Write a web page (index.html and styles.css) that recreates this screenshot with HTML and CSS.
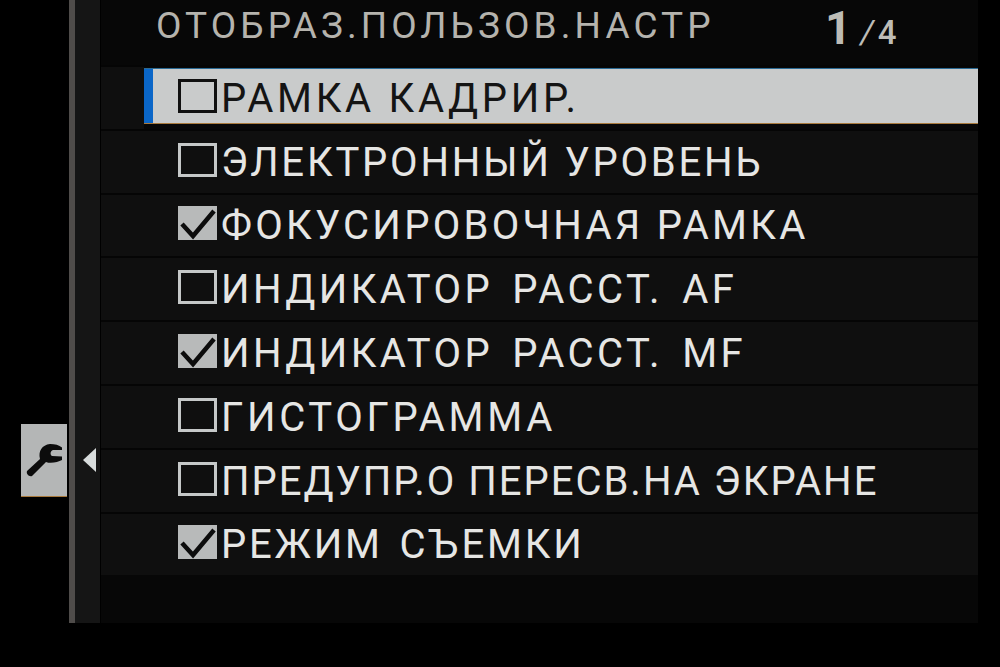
FILE: index.html
```html
<!DOCTYPE html>
<html lang="en">
<head>
    <meta charset="UTF-8">
    <title>Отображ. пользов. настр</title>
    <link rel="stylesheet" href="styles.css">
</head>
<body>
    <div class="screen">
        <div class="side">
            <div class="tool-tab">
                <svg class="tool-icon" viewBox="0 0 46 72">
                    <path d="M6 47 L19 35 C17 27 21 21 29 20 C34 20 38 21 41 23.5 L41 26 L32 26 C29 27 29 31 31 32 L41 32.5 L41 36 C37 38 30 40 25 38 L11 52 C8 53 5 50 6 47 Z" />
                </svg>
            </div>
        </div>
        <div class="edge"></div>
        <div class="rail"><span class="rail-arrow"></span></div>
        <div class="panel">
            <div class="header">
                <span class="title">ОТОБРАЗ.ПОЛЬЗОВ.НАСТР</span>
                <span class="page"><b>1</b><i>/</i>4</span>
            </div>
            <div class="row selected">
                <span class="box"></span><span class="label wide">РАМКА КАДРИР.</span>
            </div>
            <div class="row">
                <span class="box"></span><span class="label">ЭЛЕКТРОННЫЙ УРОВЕНЬ</span>
            </div>
            <div class="row">
                <span class="box checked"><svg viewBox="0 0 39 34"><path d="M4 18 L15 30 L36 5" /></svg></span><span class="label loose">ФОКУСИРОВОЧНАЯ РАМКА</span>
            </div>
            <div class="row">
                <span class="box"></span><span class="label spaced">ИНДИКАТОР РАССТ. AF</span>
            </div>
            <div class="row">
                <span class="box checked"><svg viewBox="0 0 39 34"><path d="M4 18 L15 30 L36 5" /></svg></span><span class="label spaced">ИНДИКАТОР РАССТ. MF</span>
            </div>
            <div class="row">
                <span class="box"></span><span class="label wide">ГИСТОГРАММА</span>
            </div>
            <div class="row">
                <span class="box"></span><span class="label tight">ПРЕДУПР.О ПЕРЕСВ.НА ЭКРАНЕ</span>
            </div>
            <div class="row">
                <span class="box checked"><svg viewBox="0 0 39 34"><path d="M4 18 L15 30 L36 5" /></svg></span><span class="label shot">РЕЖИМ СЪЕМКИ</span>
            </div>
        </div>
    </div>
</body>
</html>
```

FILE: styles.css
```css
html, body {
    margin: 0;
    height: 100%;
    background: #000;
}
body {
    font-family: Roboto, "Liberation Sans", sans-serif;
    overflow: hidden;
}
.screen {
    display: flex;
    height: 623px;
}
.side {
    width: 69px;
    padding: 424px 2px 0 21px;
    box-sizing: border-box;
}
.tool-tab {
    height: 73px;
    background: #b4b6b6;
    border-bottom: 1px solid #a8793c;
    box-sizing: border-box;
}
.tool-icon {
    display: block;
    width: 46px;
    height: 72px;
}
.tool-icon path {
    fill: #0c0c0c;
}
.edge {
    width: 6px;
    background: #4f4c4a;
}
.rail {
    width: 25px;
    margin-right: 1px;
    background: #151515;
    padding: 448px 0 0 8px;
    box-sizing: border-box;
}
.rail-arrow {
    display: block;
    width: 0;
    height: 0;
    border-top: 12px solid transparent;
    border-bottom: 12px solid transparent;
    border-right: 13px solid #d8dcdc;
}
.panel {
    width: 877px;
    background: #070707;
}
.header {
    height: 65px;
    padding-left: 55px;
    display: flex;
    align-items: flex-start;
    color: #b5b3ad;
    box-sizing: border-box;
}
.title {
    font-size: 37px;
    line-height: 52px;
    letter-spacing: 4.1px;
    width: 673px;
    white-space: nowrap;
}
.page {
    font-size: 33px;
    line-height: 56px;
    font-weight: 500;
    color: #bdbcb6;
    white-space: nowrap;
    margin-left: -4px;
}
.page b {
    font-size: 46px;
    line-height: 56px;
    font-weight: 700;
    margin-right: 9px;
}
.page i {
    font-weight: 400;
    margin-right: 4px;
}
.row {
    height: 63.8px;
    box-sizing: border-box;
    padding-left: 77px;
    display: flex;
    align-items: center;
    background: #0f0f0f;
    border-top: 2px solid #050505;
    color: #e6e6e4;
}
.row.selected {
    background:
        linear-gradient(#070707 1px, #2a6a94 1px, #2a6a94 2px, transparent 2px, transparent 56px, #a8793c 56px, #a8793c 57px, #070707 57px) 43px 0 no-repeat,
        linear-gradient(90deg, #0f0f0f 43px, #0a66c8 43px, #0a66c8 52px, #c9cbcb 52px);
    color: #141414;
}
.box {
    flex: none;
    width: 39px;
    height: 34px;
    margin-bottom: 4px;
    border: 3px solid #c5c8c8;
    box-sizing: border-box;
}
.selected .box {
    border-color: #101010;
}
.box.checked {
    border: none;
    background: #b8baba;
}
.box svg {
    display: block;
    width: 39px;
    height: 34px;
}
.box path {
    fill: none;
    stroke: #0c0c0c;
    stroke-width: 4.5;
}
.label {
    margin: 2px 0 0 4px;
    font-size: 40px;
    line-height: 44px;
    letter-spacing: 2.8px;
    white-space: nowrap;
}
.label.tight {
    letter-spacing: 2px;
}
.label.loose {
    letter-spacing: 3.3px;
}
.label.wide {
    letter-spacing: 3.7px;
}
.label.spaced {
    letter-spacing: 3.4px;
    word-spacing: 6px;
}
.label.shot {
    letter-spacing: 2.8px;
    word-spacing: 4px;
}
```
